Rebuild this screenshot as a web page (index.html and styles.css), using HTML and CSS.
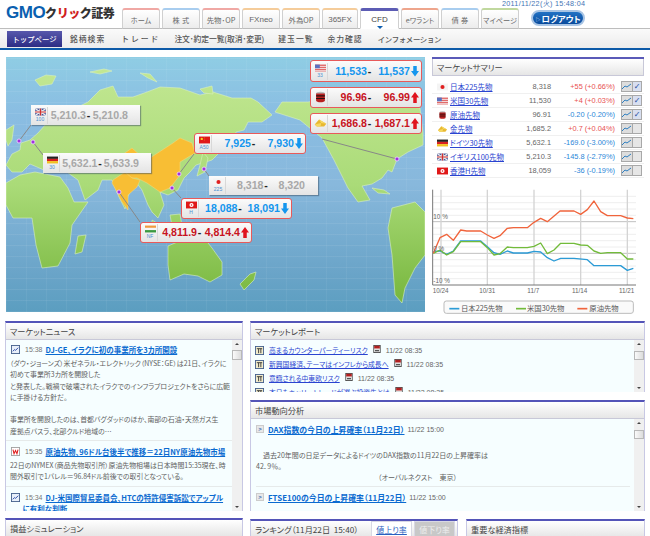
FILE: index.html
```html
<!DOCTYPE html>
<html lang="ja">
<head>
<meta charset="utf-8">
<title>GMOクリック証券</title>
<link rel="stylesheet" href="styles.css">
</head>
<body>
<svg class="defs" width="0" height="0" aria-hidden="true">
  <symbol id="f-jp" viewBox="0 0 16 10"><rect width="16" height="10" fill="#f4f4f4"/><circle cx="8" cy="5" r="3" fill="#e02020"/></symbol>
  <symbol id="f-us" viewBox="0 0 16 10"><rect width="16" height="10" fill="#e06a6a"/><rect y="2" width="16" height="1.4" fill="#f4dcdc"/><rect y="5" width="16" height="1.4" fill="#f4dcdc"/><rect y="8" width="16" height="1.2" fill="#f4dcdc"/><rect width="7" height="5.4" fill="#5a70c0"/></symbol>
  <symbol id="f-uk" viewBox="0 0 16 10"><rect width="16" height="10" fill="#3a4a90"/><path d="M0 0L16 10M16 0L0 10" stroke="#eee" stroke-width="2"/><path d="M8 0V10M0 5H16" stroke="#eee" stroke-width="3.4"/><path d="M8 0V10M0 5H16" stroke="#d03030" stroke-width="1.8"/></symbol>
  <symbol id="f-de" viewBox="0 0 16 10"><rect width="16" height="3.4" fill="#222"/><rect y="3.3" width="16" height="3.4" fill="#d82020"/><rect y="6.6" width="16" height="3.4" fill="#f2c020"/></symbol>
  <symbol id="f-hk" viewBox="0 0 16 10"><rect width="16" height="10" fill="#e01818"/><circle cx="8" cy="5" r="3" fill="#fff"/><circle cx="8" cy="5" r="1.1" fill="#e01818"/></symbol>
  <symbol id="f-cn" viewBox="0 0 16 10"><rect width="16" height="10" fill="#e01818"/><circle cx="4" cy="3.4" r="1.7" fill="#f4d020"/><circle cx="7.6" cy="1.8" r=".5" fill="#f4d020"/><circle cx="8.4" cy="3.6" r=".5" fill="#f4d020"/><circle cx="7.6" cy="5.4" r=".5" fill="#f4d020"/></symbol>
  <symbol id="f-in" viewBox="0 0 16 10"><rect width="16" height="3.4" fill="#f09a40"/><rect y="3.3" width="16" height="3.4" fill="#f6f6f6"/><rect y="6.6" width="16" height="3.4" fill="#3a9a40"/></symbol>
  <symbol id="f-oil" viewBox="0 0 16 14"><ellipse cx="8" cy="2.6" rx="5.4" ry="2" fill="#bbb"/><path d="M2.6 2.6h10.8v9c0 1-2.4 2-5.4 2s-5.4-1-5.4-2z" fill="#b82020"/><path d="M2.6 5.6h10.8M2.6 8.8h10.8" stroke="#2a1010" stroke-width="1.4"/></symbol>
  <symbol id="f-gold" viewBox="0 0 18 14"><path d="M1 9L7 2l10 6-3 4H4z" fill="#e8b830"/><path d="M7 2l3 5 7 1-10-6zM1 9l9-2-1 5H4z" fill="#f6d860"/></symbol>
  <symbol id="i-dj" viewBox="0 0 10 10"><rect x=".5" y=".5" width="9" height="9" fill="#e8f0fa" stroke="#44608c"/><path d="M2 7l2-2 1 1 3-3" stroke="#2040a0" fill="none"/></symbol>
  <symbol id="i-w" viewBox="0 0 10 10"><rect x=".5" y=".5" width="9" height="9" fill="#fff" stroke="#a0a0a0"/><path d="M2.2 3l1.2 4.4L5 4l1.6 3.4L7.8 3" stroke="#e02020" fill="none" stroke-width="1.2"/></symbol>
  <symbol id="i-fc" viewBox="0 0 10 10"><rect x=".5" y=".5" width="9" height="9" fill="#f2eccc" stroke="#44608c"/><path d="M2 3h6M4 3v5M6.5 3v5" stroke="#333" fill="none"/></symbol>
  <symbol id="i-pdf" viewBox="0 0 9 10"><rect x=".5" y=".5" width="8" height="9" fill="#fff" stroke="#333"/><rect x="1" y="1" width="7" height="3.4" fill="#b02020"/><rect x="2" y="6" width="5" height="2" fill="#555"/></symbol>
</svg>

<header class="top">
  <div class="logo"><span class="logo-gmo">GMO</span><span class="logo-ja">ク<span class="logo-red">リッ</span>ク証券</span></div>
  <nav class="tabs">
    <a class="tab t-red">ホーム</a>
    <a class="tab t-blue wide">株 式</a>
    <a class="tab t-red">先物･OP</a>
    <a class="tab t-org">FXneo</a>
    <a class="tab t-org">外為OP</a>
    <a class="tab t-org">365FX</a>
    <a class="tab t-act">CFD</a>
    <a class="tab t-sal">eワラント</a>
    <a class="tab t-blue wide">債 券</a>
    <a class="tab t-grn">マイページ</a>
  </nav>
  <a class="logout"><span class="logout-arrow">▷</span>ログアウト</a>
  <div class="clock">2011/11/22(火) 15:48:04</div>
</header>
<nav class="subnav">
  <a class="sub sub-on">トップページ</a>
  <a class="sub s1">銘柄検索</a>
  <a class="sub s2">トレード</a>
  <a class="sub s3">注文･約定一覧(取消･変更)</a>
  <a class="sub s4">建玉一覧</a>
  <a class="sub s5">余力確認</a>
  <a class="sub s6">インフォメーション</a>
</nav>

<main class="main">
  <section class="toprow">
    <div class="map">
      <svg class="world" viewBox="6 57 419 255" width="419" height="255">
        <defs>
          <linearGradient id="land2" gradientUnits="userSpaceOnUse" x1="0" y1="60" x2="0" y2="310"><stop offset="0" stop-color="#c4e894"/><stop offset=".5" stop-color="#aadb78"/><stop offset="1" stop-color="#74b43a"/></linearGradient>
        </defs>
        <g fill="url(#land2)" stroke="#d8f0c0" stroke-width=".6">
          <path d="M6 165L12 154 20 150 21 143 30 140 38 133 46 124 55 118 72 110 88 102 100 90 113 86 118 97 133 97 147 92 160 87 180 88 200 95 213 92 232 98 251 98 258 102 272 115 262 122 248 122 244 130 236 132 232 145 222 150 212 160 196 165 190 172 184 178 178 190 168 195 160 192 164 205 158 218 152 212 148 205 142 190 136 182 128 196 125 209 119 197 112 180 102 180 98 190 85 200 78 180 64 170 50 166 44 170 30 164 22 172 12 172z"/>
          <path d="M6 183L20 175 35 172 60 177 68 188 74 202 88 202 72 225 70 243 58 266 42 268 36 245 32 218 13 218 6 205z"/>
          <path d="M78 236L86 235 82 252 75 254z"/>
          <path d="M168 246L182 240 190 232 196 240 204 238 212 248 222 262 222 275 210 282 198 276 184 274 170 280 168 265z"/>
          <path d="M240 284L250 274 256 272 254 280 244 290z"/>
          <path d="M275 112L282 102 308 102 322 100 350 100 420 108 423 133 423 145 408 152 397 159 392 172 388 170 382 178 372 184 362 186 370 200 358 202 348 188 334 160 322 138 300 120z"/>
          <path d="M392 208L415 202 425 212 425 255 415 268 405 288 402 303 395 295 392 255 388 228z"/>
          <path d="M35 80L46 75 56 76 52 84 40 86z"/>
          <path d="M90 72L104 69 112 71 100 74z"/>
          <path d="M140 73L150 74 157 82 148 78z"/>
          <path d="M200 89L212 86 213 94 204 93z"/>
          <path d="M203 152L208 158 205 172 197 176 200 165z"/>
          <path d="M6 130L14 125 12 140 8 146 6 140z"/>
          <path d="M152 220L160 225 172 232 166 236 152 226z"/>
          <path d="M170 215L180 214 182 226 172 226z"/>
          <path d="M190 222L214 226 224 238 212 236 194 230z"/>
          <path d="M372 188L384 190 390 194 378 193z"/>
        </g>
        <g fill="#f8be34" stroke="#f6d880" stroke-width=".5">
          <path d="M132 148L143 158 150 158 173 143 180 138 192 143 195 153 180 162 180 175 170 188 160 192 147 183 137 178 128 178 125 170 122 155z"/>
          <path d="M113 180L125 172 132 178 140 180 137 187 128 195 128 210 122 202 117 192 112 183z"/>
        </g>
        <g stroke="#888" stroke-width="1" fill="none">
          <path d="M19 141L31 125"/>
          <path d="M33 142L43 155"/>
          <path d="M119 192L140 222"/>
          <path d="M179 174L194 154"/>
          <path d="M172 188L181 198"/>
          <path d="M204 169L209 176"/>
          <path d="M397 159L322 139"/>
        </g>
        <g fill="#a030e0" stroke="#f0d8ff" stroke-width=".8">
          <circle cx="19" cy="141" r="2"/><circle cx="33" cy="142" r="2"/><circle cx="119" cy="192" r="2"/><circle cx="179" cy="174" r="2"/><circle cx="172" cy="188" r="2"/><circle cx="204" cy="169" r="2"/><circle cx="397" cy="159" r="2"/>
        </g>
      </svg>

      <div class="quote live q-us"><span class="qf"><svg class="fl"><use href="#f-us"/></svg><i>33</i></span><b class="down">11,533</b><em>-</em><b class="down">11,537</b><span class="ar ar-d"></span></div>
      <div class="quote live q-oil"><span class="qf"><svg class="fl fl-t"><use href="#f-oil"/></svg></span><b class="up">96.96</b><em>-</em><b class="up">96.99</b><span class="ar ar-u"></span></div>
      <div class="quote live q-gold"><span class="qf"><svg class="fl fl-t"><use href="#f-gold"/></svg></span><b class="up">1,686.8</b><em>-</em><b class="up">1,687.1</b><span class="ar ar-u"></span></div>
      <div class="quote live q-cn"><span class="qf"><svg class="fl"><use href="#f-cn"/></svg><i>A50</i></span><b class="down">7,925</b><em>-</em><b class="down">7,930</b><span class="ar ar-d"></span></div>
      <div class="quote idle q-jp"><span class="qf"><svg class="fl"><use href="#f-jp"/></svg><i>225</i></span><b>8,318</b><em>-</em><b>8,320</b></div>
      <div class="quote live q-hk"><span class="qf"><svg class="fl"><use href="#f-hk"/></svg><i>H</i></span><b class="down">18,088</b><em>-</em><b class="down">18,091</b><span class="ar ar-d"></span></div>
      <div class="quote live q-in"><span class="qf"><svg class="fl"><use href="#f-in"/></svg><i>NF</i></span><b class="up">4,811.9</b><em>-</em><b class="up">4,814.4</b><span class="ar ar-u"></span></div>
      <div class="quote idle q-uk"><span class="qf"><svg class="fl"><use href="#f-uk"/></svg><i>100</i></span><b>5,210.3</b><em>-</em><b>5,210.8</b></div>
      <div class="quote idle q-de"><span class="qf"><svg class="fl"><use href="#f-de"/></svg><i>30</i></span><b>5,632.1</b><em>-</em><b>5,633.9</b></div>
    </div>

    <aside class="summary">
      <div class="panel-line"></div>
      <h2 class="phead sumhead">マーケットサマリー</h2>
      <div class="rows">
        <div class="row"><svg class="rf"><use href="#f-jp"/></svg><a class="rl">日本225先物</a><span class="rv">8,318</span><span class="rc pos">+55 (+0.66%)</span><span class="rb"><span class="cb"><svg viewBox="0 0 9 9"><path d="M0 7l3-3 2 1 4-3" fill="none" stroke="#2f7fc0"/></svg></span><span class="ck on">✓</span></span></div>
        <div class="row"><svg class="rf"><use href="#f-us"/></svg><a class="rl">米国30先物</a><span class="rv">11,530</span><span class="rc pos">+4 (+0.03%)</span><span class="rb"><span class="cb"><svg viewBox="0 0 9 9"><path d="M0 7l3-3 2 1 4-3" fill="none" stroke="#2f7fc0"/></svg></span><span class="ck on">✓</span></span></div>
        <div class="row"><svg class="rf"><use href="#f-oil"/></svg><a class="rl">原油先物</a><span class="rv">96.91</span><span class="rc neg">-0.20 (-0.20%)</span><span class="rb"><span class="cb"><svg viewBox="0 0 9 9"><path d="M0 7l3-3 2 1 4-3" fill="none" stroke="#2f7fc0"/></svg></span><span class="ck on">✓</span></span></div>
        <div class="row"><svg class="rf"><use href="#f-gold"/></svg><a class="rl">金先物</a><span class="rv">1,685.2</span><span class="rc pos">+0.7 (+0.04%)</span><span class="rb"><span class="cb"><svg viewBox="0 0 9 9"><path d="M0 7l3-3 2 1 4-3" fill="none" stroke="#2f7fc0"/></svg></span><span class="ck"></span></span></div>
        <div class="row"><svg class="rf"><use href="#f-de"/></svg><a class="rl">ドイツ30先物</a><span class="rv">5,632.1</span><span class="rc neg">-169.0 (-3.00%)</span><span class="rb"><span class="cb"><svg viewBox="0 0 9 9"><path d="M0 7l3-3 2 1 4-3" fill="none" stroke="#2f7fc0"/></svg></span><span class="ck"></span></span></div>
        <div class="row"><svg class="rf"><use href="#f-uk"/></svg><a class="rl">イギリス100先物</a><span class="rv">5,210.3</span><span class="rc neg">-145.8 (-2.79%)</span><span class="rb"><span class="cb"><svg viewBox="0 0 9 9"><path d="M0 7l3-3 2 1 4-3" fill="none" stroke="#2f7fc0"/></svg></span><span class="ck"></span></span></div>
        <div class="row"><svg class="rf"><use href="#f-hk"/></svg><a class="rl">香港H先物</a><span class="rv">18,059</span><span class="rc neg">-36 (-0.19%)</span><span class="rb"><span class="cb"><svg viewBox="0 0 9 9"><path d="M0 7l3-3 2 1 4-3" fill="none" stroke="#2f7fc0"/></svg></span><span class="ck"></span></span></div>
      </div>
      <svg class="chart" viewBox="0 0 660 405" width="220" height="135">
        <g stroke="#e6e6e6" stroke-width="2"><path d="M8 34H618M8 53H618M8 72H618M8 91H618M8 129H618M8 148H618M8 167H618M8 186H618M8 224H618M8 243H618M8 262H618M8 281H618"/></g>
        <g stroke="#c0c0c0" stroke-width="3"><path d="M8 110H618M8 205H618"/></g>
        <g stroke="#d4d4d4" stroke-width="4"><path d="M33 14V300M172 14V300M312 14V300M452 14V300M592 14V300"/></g>
        <path d="M8 14V300H618" fill="none" stroke="#777" stroke-width="3"/>
        <g fill="none" stroke-width="4" stroke-linejoin="round">
          <polyline stroke="#2b9bd6" points="10,200 30,198 50,208 70,198 92,168 152,168 172,185 192,203 210,208 232,198 250,204 292,204 312,199 332,201 352,218 372,228 392,220 432,220 472,224 492,242 572,242 592,256 610,250"/>
          <polyline stroke="#72bb3a" points="10,205 30,195 50,210 70,200 92,170 152,170 172,188 192,210 210,206 232,186 250,188 292,188 312,184 332,174 352,206 372,195 392,175 432,175 452,180 472,181 492,198 512,205 532,203 572,203 592,222 610,222"/>
          <polyline stroke="#f0643c" points="10,205 30,158 50,148 70,166 92,135 110,138 152,138 172,150 192,160 210,152 232,130 250,128 292,128 312,112 332,100 352,110 390,78 432,78 452,88 472,74 492,48 512,80 532,92 572,92 592,99 610,101"/>
        </g>
        <g class="chart-t">
          <text x="10" y="103">10 %</text><text x="10" y="198">0 %</text><text x="10" y="295">-10 %</text>
          <text x="8" y="323">10/24</text><text x="148" y="323">10/31</text><text x="292" y="323">11/7</text><text x="426" y="323">11/14</text><text x="567" y="323">11/21</text>
        </g>
        <rect x="42" y="348" width="568" height="37" rx="7" fill="#fafafa" stroke="#bbb" stroke-width="3"/>
        <g stroke-width="5"><path d="M58 371H88" stroke="#2b9bd6"/><path d="M258 371H288" stroke="#72bb3a"/><path d="M442 371H472" stroke="#f0643c"/></g>
        <g class="chart-l"><text x="93" y="379">日本225先物</text><text x="291" y="379">米国30先物</text><text x="478" y="379">原油先物</text></g>
      </svg>
    </aside>
  </section>

  <section class="lower">
    <div class="col-left">
      <article class="panel news">
        <h2 class="phead">マーケットニュース</h2>
        <div class="pbody">
          <div class="pscroll">
            <div class="nitem">
              <p class="nt"><svg class="ic"><use href="#i-dj"/></svg><span class="tm">15:38</span><a class="blink">DJ-GE、イラクに初の事業所を3カ所開設</a></p>
              <p class="ntx">（ダウ・ジョーンズ）米ゼネラル・エレクトリック（NYSE：GE）は21日、イラクに<br>初めて事業所3カ所を開設した<br>と発表した。戦禍で破壊されたイラクでのインフラプロジェクトをさらに広範<br>に手掛ける方針だ。<br><br>事業所を開設したのは、首都バグダッドのほか、南部の石油・天然ガス生<br>産拠点バスラ、北部クルド地域の…</p>
            </div>
            <div class="nitem">
              <p class="nt"><svg class="ic"><use href="#i-w"/></svg><span class="tm">15:35</span><a class="blink">原油先物、96ドル台後半で推移＝22日NY原油先物市場</a></p>
              <p class="ntx">22日のNYMEX（商品先物取引所）原油先物相場は日本時間15:35現在、時<br>間外取引で1バレル＝96.84ドル前後での取引となっている。</p>
            </div>
            <div class="nitem last">
              <p class="nt"><svg class="ic"><use href="#i-dj"/></svg><span class="tm">15:34</span><a class="blink">DJ-米国際貿易委員会、HTCの特許侵害訴訟でアップル<br>に有利な判断</a></p>
            </div>
          </div>
          <div class="sbar"><span class="sb-up"></span><span class="sb-th th-news"></span><span class="sb-dn"></span></div>
        </div>
      </article>
      <article class="panel sim"><h2 class="phead">損益シミュレーション</h2></article>
    </div>

    <div class="col-right">
      <article class="panel report">
        <h2 class="phead">マーケットレポート</h2>
        <div class="pbody">
          <div class="pscroll rlist">
            <p class="rp"><svg class="ic"><use href="#i-fc"/></svg><a class="plink">高まるカウンターパーティーリスク</a><svg class="ipdf"><use href="#i-pdf"/></svg><span class="dt">11/22 08:35</span></p>
            <p class="rp"><svg class="ic"><use href="#i-fc"/></svg><a class="plink">新興国経済、テーマはインフレから成長へ</a><svg class="ipdf"><use href="#i-pdf"/></svg><span class="dt">11/22 08:35</span></p>
            <p class="rp"><svg class="ic"><use href="#i-fc"/></svg><a class="plink">意識される中東欧リスク</a><svg class="ipdf"><use href="#i-pdf"/></svg><span class="dt">11/22 08:35</span></p>
            <p class="rp"><svg class="ic"><use href="#i-fc"/></svg><a class="plink">本日もキャリートレードが選ぶ投資先とは</a><svg class="ipdf"><use href="#i-pdf"/></svg><span class="dt">11/22 08:35</span></p>
          </div>
          <div class="sbar"><span class="sb-up"></span><span class="sb-th"></span><span class="sb-dn"></span></div>
        </div>
      </article>
      <article class="panel trend">
        <h2 class="phead">市場動向分析</h2>
        <div class="pbody">
          <div class="pscroll tlist">
            <p class="tt"><span class="tar">&gt;</span><a class="blink">DAX指数の今日の上昇確率（11月22日）</a><span class="dt">11/22 15:00</span></p>
            <div class="ttx">
              <p class="ttx-p">　過去20年間の日足データによるドイツのDAX指数の11月22日の上昇確率は<br>42．9％。</p>
              <p class="ttx-c">（オーバルネクスト　東京）</p>
            </div>
            <p class="tt"><span class="tar">&gt;</span><a class="blink">FTSE100の今日の上昇確率（11月22日）</a><span class="dt">11/22 15:00</span></p>
          </div>
          <div class="sbar"><span class="sb-up"></span><span class="sb-th"></span><span class="sb-dn"></span></div>
        </div>
      </article>
      <div class="pair">
        <article class="panel rank">
          <h2 class="phead rankhead"><span class="rank-t">ランキング（11月22日&nbsp;&nbsp;15:40）</span><a class="rt rt-on">値上り率</a><a class="rt rt-off">値下り率</a></h2>
        </article>
        <article class="panel econ"><h2 class="phead">重要な経済指標</h2></article>
      </div>
    </div>
  </section>
</main>
</body>
</html>
```

FILE: styles.css
```css
* { box-sizing: border-box; }
html, body { margin: 0; padding: 0; width: 650px; height: 536px; overflow: hidden; background: #fff; }
body { font-family: "Noto Sans CJK JP", "Liberation Sans", sans-serif; font-size: 7.5px; color: #555; font-feature-settings: "palt"; }
p, h2 { margin: 0; font-weight: normal; }
a { cursor: pointer; }
.defs { position: absolute; }

/* header */
.top { position: relative; display: flex; align-items: flex-end; height: 29px; border-bottom: 1px solid #bdbdbd; }
.logo { width: 122px; height: 28px; padding: 4px 0 0 6px; display: flex; align-items: flex-start; white-space: nowrap; }
.logo-gmo { font: bold 17px/18px "Liberation Sans", sans-serif; color: #0a60b0; letter-spacing: -.5px; }
.logo-ja { font-size: 12px; line-height: 18px; font-weight: 900; color: #333; font-feature-settings: normal; letter-spacing: -.5px; }
.logo-red { color: #d02020; }
.tabs { display: flex; gap: 2px; height: 21px; margin-bottom: -1px; }
.tab { width: 38px; height: 21px; border: 1px solid #d0d0d0; border-top: 2px solid #ccc; border-bottom-color: #bdbdbd; border-radius: 3px 3px 0 0; background: linear-gradient(#fff, #ececec); text-align: center; font-size: 7.2px; line-height: 20px; color: #666; white-space: nowrap; }
.tab.wide { letter-spacing: .4px; }
.t-red { border-top-color: #f0a8a4; }
.t-blue { border-top-color: #a8cdef; }
.t-org { border-top-color: #f5cc9a; }
.t-sal { border-top-color: #eea58c; }
.t-grn { border-top-color: #c0d89e; }
.t-act { position: relative; border-top: 3px solid #5c5cb4; background: #fff; border-bottom-color: #fff; width: 39px; color: #444; font-size: 8px; line-height: 17px; font-family: "Liberation Sans", sans-serif; }
.t-act::after { content: ""; position: absolute; left: 16px; top: 15px; border: 3px solid transparent; border-top: 3px solid #1060b0; }
.tab:nth-child(4), .tab:nth-child(6) { font-family: "Liberation Sans", sans-serif; font-size: 8px; }
.tab:nth-child(5), .tab:nth-child(3) { font-size: 7.4px; }
.tab:nth-child(6) { width: 36px; }
.logout { align-self: flex-start; margin: 10px 0 0 12px; width: 54px; height: 16px; border-radius: 8px; border: 2px solid #a8c4e4; background: linear-gradient(#2272c4, #084a9c); color: #fff; font-size: 8.4px; font-weight: bold; line-height: 12px; text-align: center; white-space: nowrap; }
.logout-arrow { font-size: 5px; margin-right: 1px; color: #cde; vertical-align: 1px; }
.clock { position: absolute; left: 502px; top: -1px; font: 7.2px/9px "Liberation Sans", sans-serif; color: #3f74b4; letter-spacing: .3px; white-space: nowrap; }

.subnav { position: relative; display: flex; height: 21px; padding-left: 7px; background: linear-gradient(#fafafa, #ececec); border-bottom: 2px solid #0d5aa8; align-items: center; }
.sub { font-size: 7.8px; color: #555; white-space: nowrap; letter-spacing: .2px; font-weight: 500; font-feature-settings: normal; }
.sub-on { width: 55px; height: 16px; margin-top: 1px; line-height: 16px; text-align: center; color: #fff; background: linear-gradient(#5858ac, #2c2c84); letter-spacing: 0; font-size: 7.4px; }
.s1 { margin-left: 8px; letter-spacing: 1px; }
.s2 { margin-left: 16px; letter-spacing: 2px; }
.s3 { margin-left: 14px; letter-spacing: -.1px; }
.s4 { margin-left: 14px; letter-spacing: 1px; }
.s5 { margin-left: 14px; letter-spacing: 1px; }
.s6 { margin-left: 15px; letter-spacing: -.3px; font-size: 7.4px; }

/* top row */
.main { display: flex; flex-direction: column; }
.toprow { display: flex; gap: 7px; padding: 7px 0 0 6px; height: 271px; }
.map { position: relative; width: 419px; height: 255px; flex: none; overflow: hidden; background: repeating-linear-gradient(0deg, rgba(255,255,255,.07) 0 1px, transparent 1px 11px), repeating-linear-gradient(90deg, rgba(255,255,255,.05) 0 1px, transparent 1px 20px), linear-gradient(#8fcde4 0, #8abde2 22%, #88b8dc 50%, #6aa4c8 85%, #5b9ec0 100%); }
.world { display: block; position: absolute; left: 0; top: 0; }

.quote { position: absolute; display: flex; align-items: center; height: 21px; background: linear-gradient(#fbfbfb, #e4e4e4); font: bold 10.6px/1 "Liberation Sans", sans-serif; white-space: nowrap; }
.quote.live { border: 1.5px solid #e85a5a; border-radius: 3px; }
.quote.idle { box-shadow: 1px 1px 1px rgba(60,80,100,.5); }
.quote.idle b { color: #a8a8a8; }
.quote b { font-weight: bold; flex: 1; text-align: right; }
.quote em { font-style: normal; color: #222; width: 5px; text-align: center; flex: none; }
.quote .up { color: #c8141e; }
.quote .down { color: #1496ee; }
.qf { flex: none; width: 15px; margin: 0 1px 0 2px; height: 17px; display: flex; flex-direction: column; align-items: center; justify-content: flex-start; border-right: 1px solid #d8d8d8; }
.qf i { font: normal 5px/6px "Liberation Sans", sans-serif; color: #4a90d0; }
.fl { width: 11px; height: 8px; margin-top: 1px; flex: none; }
.fl-t { width: 13px; height: 12px; margin-top: 2px; }
.ar { flex: none; width: 8px; height: 11px; margin: 0 2px 0 1px; }
.ar-d { background: #1496ee; clip-path: polygon(28% 0, 72% 0, 72% 50%, 100% 50%, 50% 100%, 0 50%, 28% 50%); }
.ar-u { background: #e0141e; clip-path: polygon(50% 0, 100% 50%, 72% 50%, 72% 100%, 28% 100%, 28% 50%, 0 50%); }

.q-us { left: 304px; top: 3px; width: 112px; height: 22px; }
.q-oil { left: 304px; top: 30px; width: 112px; }
.q-gold { left: 304px; top: 56px; width: 112px; }
.q-cn { left: 188px; top: 76px; width: 112px; }
.q-jp { left: 203px; top: 119px; width: 109px; height: 19px; padding-right: 13px; }
.q-hk { left: 175px; top: 141px; width: 111px; }
.q-in { left: 134px; top: 165px; width: 112px; }
.q-uk { left: 25px; top: 48px; width: 109px; height: 20px; padding-right: 12px; }
.q-de { left: 37px; top: 96px; width: 108px; height: 20px; padding-right: 12px; }

/* summary */
.summary { width: 212px; flex: none; }
.panel-line { height: 2px; background: #5a5ab8; }
.phead { height: 17px; background: linear-gradient(#fff, #e6e6e6); border-bottom: 1px solid #c8c8d8; padding: 0 4px 0 4px; font-size: 8.2px; line-height: 16px; color: #444; white-space: nowrap; }
.sumhead { border-left: 1px solid #c8c8d8; border-right: 1px solid #c8c8d8; }
.rows { margin-top: 4px; margin-right: 0; }
.row { display: flex; align-items: center; height: 14px; border-bottom: 1px solid #f0f0f0; padding-left: 5px; }
.rf { width: 11px; height: 8px; flex: none; }
.rl { flex: none; width: 56px; margin-left: 2px; color: #2a44d0; text-decoration: underline; font-size: 7.5px; white-space: nowrap; }
.rv { flex: none; width: 45px; text-align: right; color: #666; font: 7.4px "Liberation Sans", sans-serif; }
.rc { flex: none; width: 64px; text-align: right; font: 7.4px "Liberation Sans", sans-serif; white-space: nowrap; }
.pos { color: #e85050; }
.neg { color: #2a86d8; }
.rb { flex: none; margin-left: 6px; width: 21px; height: 11px; background: #a8a8a8; display: flex; gap: 1px; padding: 1px; }
.cb { width: 10px; height: 9px; background: #ddd; display: block; }
.cb svg { display: block; width: 9px; height: 9px; }
.ck { width: 8px; height: 9px; background: #e6e6e6; color: #224c9c; font: bold 8px/9px "DejaVu Sans", sans-serif; text-align: center; }
.ck.on { background: #d8dff0; }
.chart { display: block; margin: 7px 0 0 -2px; overflow: visible; }
.chart-t text { font: 19px "Liberation Sans", sans-serif; fill: #666; }
.chart-l text { font: 22px "Noto Sans CJK JP", sans-serif; fill: #555; }

/* lower */
.lower { display: flex; gap: 7px; padding: 0 0 0 5px; }
.col-left { width: 238px; flex: none; display: flex; flex-direction: column; gap: 7px; }
.col-right { width: 395px; flex: none; display: flex; flex-direction: column; gap: 8px; }
.panel { border: 1px solid #c8c8e4; border-top: 2px solid #5454b8; background: #fff; }
.pbody { display: flex; background: #f6feff; overflow: hidden; }
.news { height: 190px; }
.news .pbody { height: 171px; }
.sim, .pair .panel { height: 40px; }
.report { height: 71px; }
.report .pbody { height: 52px; }
.trend { height: 111px; }
.trend .pbody { height: 92px; }
.pair { display: flex; gap: 8px; }
.rank { width: 208px; flex: none; }
.econ { flex: 1; }
.pscroll { flex: 1; min-width: 0; overflow: hidden; }
.sbar { flex: none; width: 10px; background: #f0f0f0; display: flex; flex-direction: column; position: relative; }
.sb-up, .sb-dn { height: 9px; flex: none; position: relative; }
.sb-up::after, .sb-dn::after { content: ""; position: absolute; left: 3px; border: 2px solid transparent; }
.sb-up::after { top: 1px; border-bottom: 2px solid #444; }
.sb-dn { margin-top: auto; }
.sb-dn::after { top: 4px; border-top: 2px solid #444; }
.sb-th { height: 9px; margin-top: 2px; background: linear-gradient(90deg, #fafafa, #dcdcdc); border: 1px solid #b8b8b8; }
.th-news { height: 10px; margin-top: 1px; }

.nitem { padding: 4px 2px 3px 4px; border-bottom: 1px solid #e6eaea; }
.nitem + .nitem { padding-top: 5px; }
.nitem.last { border: 0; }
.nt { display: flex; align-items: flex-start; line-height: 11px; padding-left: 1px; }
.ic { flex: none; width: 9px; height: 9px; margin-right: 5px; margin-top: 1px; }
.tm { flex: none; font: 7px/11px "Liberation Sans", sans-serif; color: #777; margin-right: 3px; }
.blink { color: #0a6ad0; font-weight: 700; text-decoration: underline; font-size: 7.5px; white-space: nowrap; }
.last .blink { display: block; margin-left: -23px; text-indent: 23px; }
.ntx { margin-top: 3px; line-height: 11.3px; white-space: nowrap; color: #606060; font-size: 6.9px; }

.rlist { padding: 3px 0 0 4px; }
.rp { display: flex; align-items: center; height: 14px; white-space: nowrap; }
.plink { color: #2a44d0; text-decoration: underline; font-size: 6.8px; }
.ipdf { width: 8px; height: 8px; margin: -3px 5px 0 5px; flex: none; }
.dt { font: 7px "Liberation Sans", sans-serif; color: #666; }
.tlist { padding: 4px 4px 0 5px; }
.tt { display: flex; align-items: center; height: 12px; white-space: nowrap; }
.tt .dt { margin-left: 3px; }
.tt .blink { font-size: 7.9px; }
.tar { width: 8px; height: 8px; margin-right: 4px; background: #e8e8e8; border: 1px solid #ccc; color: #3a6ab0; font: bold 6px/6px "Liberation Sans", sans-serif; text-align: center; }
.ttx { margin-top: 15px; padding-bottom: 3px; margin-bottom: 4px; border-bottom: 1px solid #e6eaea; line-height: 11px; white-space: nowrap; color: #606060; font-size: 7px; }
.ttx-c { padding-left: 122px; }

.rankhead { display: flex; padding-right: 0; }
.rank-t { flex: 1; }
.rt { width: 41px; height: 16px; margin-right: 2px; text-align: center; font-size: 8px; line-height: 16px; border: 1px solid #d8d8e4; border-bottom: 0; }
.rt-on { background: #fff; color: #2a60c0; text-decoration: underline; }
.rt-off { background: #c8c8c8; color: #eee; }
```
